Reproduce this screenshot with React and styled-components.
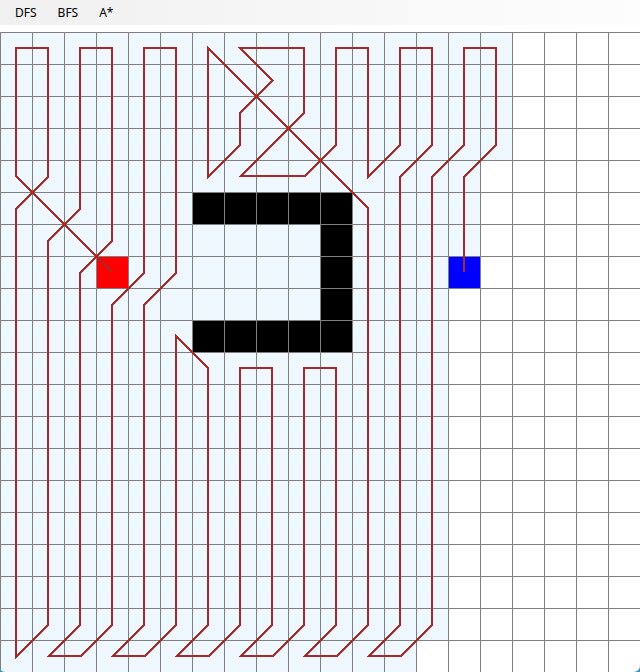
import React from "react";
import styled, { createGlobalStyle } from "styled-components";

const GlobalStyle = createGlobalStyle`
  * { box-sizing: border-box; }
  body { margin: 0; background: #fff; font-family: "Noto Sans", "Open Sans", sans-serif; }
`;

const CELL = 32;
const SIZE = 20;

const Window = styled.main`
  display: flex;
  flex-direction: column;
  min-height: 100vh;
  overflow: hidden;
  background: #fff;
`;

const MenuBar = styled.nav`
  display: flex;
  align-items: center;
  gap: 5px;
  height: 25px;
  padding: 0 7px;
  margin-bottom: 7px;
  background: linear-gradient(90deg, #f0f0f0, #fdfdfd);
`;

const MenuButton = styled.button`
  height: 24px;
  padding: 0 8px;
  border: 0;
  background: transparent;
  color: #000;
  font: 12px/24px "Noto Sans", "Open Sans", sans-serif;
  cursor: pointer;
  &:hover { background: #d6e8f8; }
`;

const Board = styled.section`
  position: relative;
  overflow: hidden;
`;

const Grid = styled.div`
  display: grid;
  grid-template-columns: repeat(${SIZE}, ${CELL}px);
  grid-auto-rows: ${CELL}px;
`;

const fills = {
  open: "#ffffff",
  visited: "#f0f8ff",
  wall: "#000000",
  start: "#ff0000",
  goal: "#0000ff",
};

const Cell = styled.div`
  border: solid #808080;
  border-width: 1px 0 0 1px;
  background: ${(p) => fills[p.$kind]};
`;

const Overlay = styled.svg`
  position: absolute;
  top: 0;
  left: 0;
  pointer-events: none;
`;

const visitedRows = (col) => {
  if (col < 13) return 20;
  return { 13: 19, 14: 7, 15: 4 }[col] ?? 0;
};

const kindAt = (col, row) => {
  if (row === 7 && col === 3) return "start";
  if (row === 7 && col === 14) return "goal";
  if ((row === 5 || row === 9) && col >= 6 && col <= 10) return "wall";
  if (col === 10 && row > 5 && row < 9) return "wall";
  return row < visitedRows(col) ? "visited" : "open";
};

const cells = Array.from({ length: SIZE * SIZE }, (_, i) => kindAt(i % SIZE, Math.floor(i / SIZE)));

/* Turning points of the search, as [column, row]. */
const route = [
  [3, 7], [0, 4], [0, 0], [1, 0], [1, 4], [0, 5], [0, 19], [1, 18],
  [1, 6], [2, 5], [2, 0], [3, 0], [3, 6], [2, 7], [2, 18], [1, 19],
  [2, 19], [3, 18], [3, 8], [4, 7], [4, 0], [5, 0], [5, 7], [4, 8],
  [4, 18], [3, 19], [4, 19], [5, 18], [5, 9], [6, 10], [6, 18], [5, 19],
  [6, 19], [7, 18], [7, 10], [8, 10], [8, 18], [7, 19], [8, 19], [9, 18],
  [9, 10], [10, 10], [10, 18], [9, 19], [10, 19], [11, 18], [11, 5], [6, 0],
  [6, 4], [7, 3], [7, 2], [8, 1], [7, 0], [9, 0], [9, 2], [7, 4],
  [9, 4], [10, 3], [10, 0], [11, 0], [11, 4], [12, 3], [12, 0], [13, 0],
  [13, 3], [12, 4], [12, 18], [11, 19], [12, 19], [13, 18], [13, 4], [14, 3],
  [14, 0], [15, 0], [15, 3], [14, 4], [14, 7],
];

/* Slightly past the cell's middle, so that diagonals cross on the grid lines. */
const CENTER = 16.4;
const points = route.map(([c, r]) => `${c * CELL + CENTER},${r * CELL + CENTER}`).join(" ");

export default function App() {
  return (
    <Window>
      <GlobalStyle />
      <MenuBar aria-label="Search algorithm">
        {["DFS", "BFS", "A*"].map((name) => (
          <MenuButton key={name} type="button">{name}</MenuButton>
        ))}
      </MenuBar>
      <Board aria-label="Search grid">
        <Grid>
          {cells.map((kind, i) => <Cell key={i} $kind={kind} />)}
        </Grid>
        <Overlay width={SIZE * CELL} height={SIZE * CELL} aria-hidden="true">
          <polyline points={points} fill="none" stroke="#a52a2a" strokeWidth="2" strokeLinejoin="miter" shapeRendering="crispEdges" />
          <path d="M0 635Q0 640 6 640H0Z M640 633Q640 640 633 640H640Z" fill="#3b8fd0" />
        </Overlay>
      </Board>
    </Window>
  );
}
